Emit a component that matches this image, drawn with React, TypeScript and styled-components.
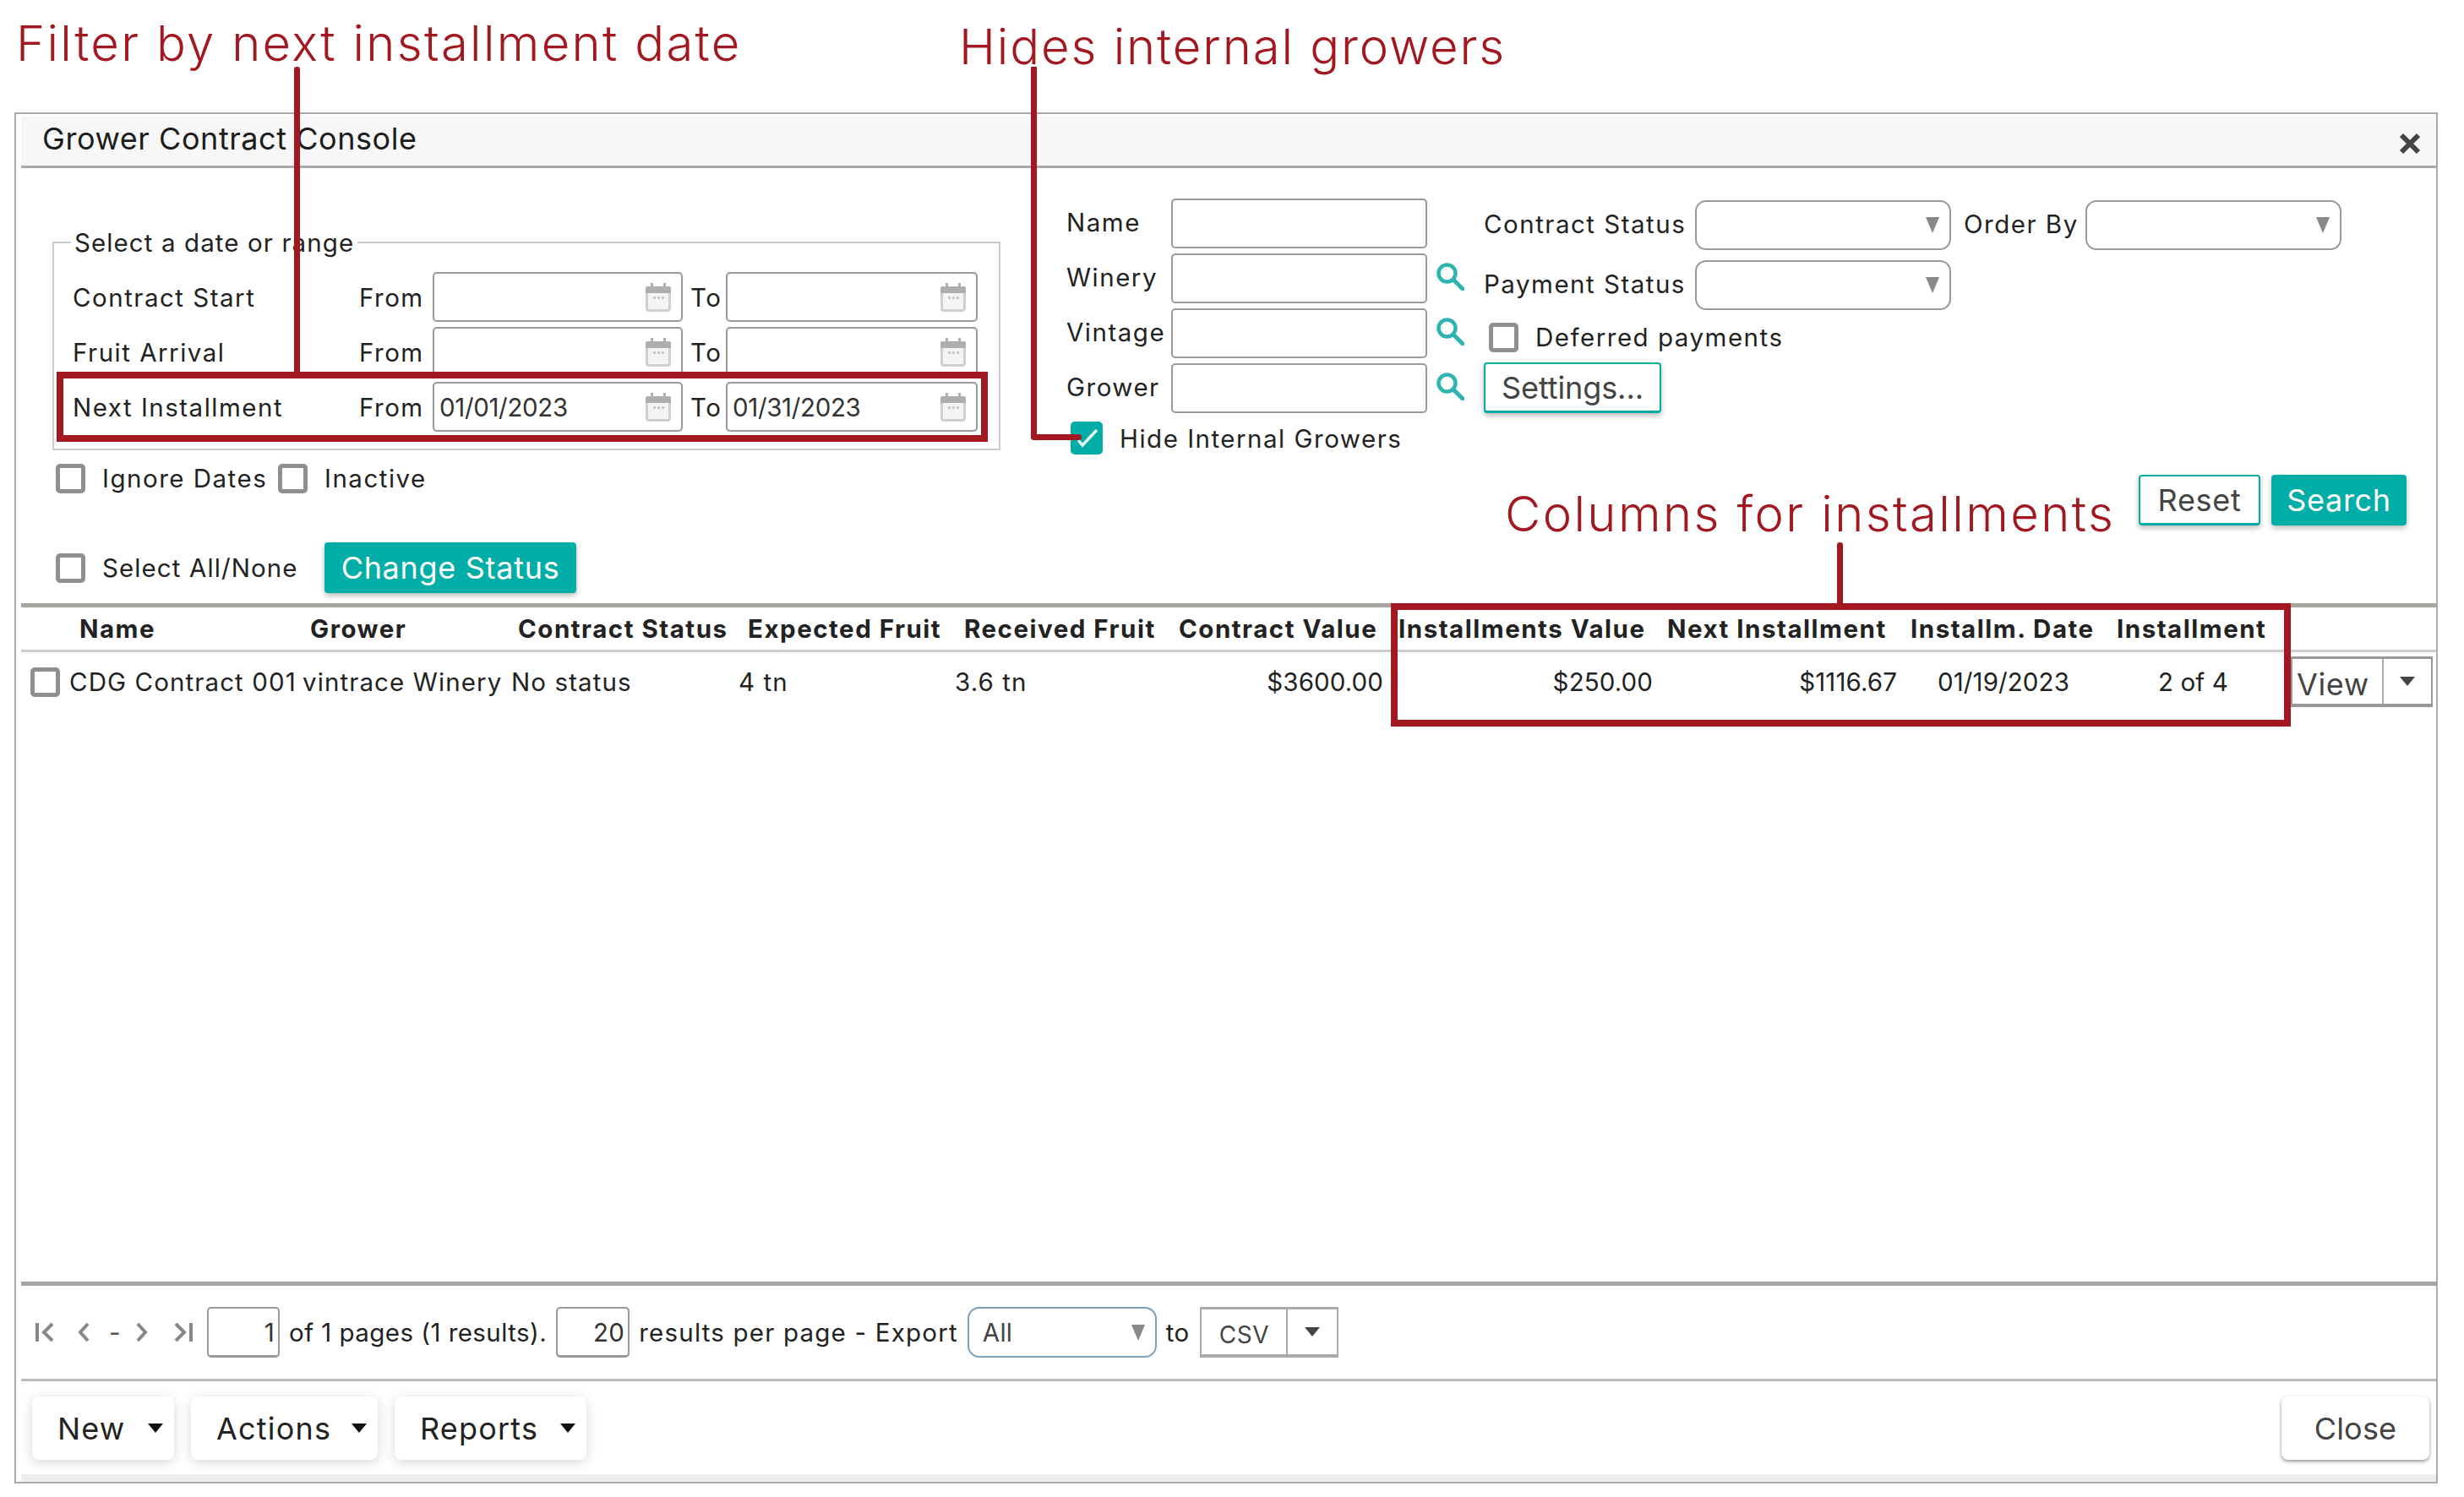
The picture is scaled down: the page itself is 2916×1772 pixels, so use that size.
import React from "react";
import styled, { createGlobalStyle } from "styled-components";

const GlobalStyle = createGlobalStyle`
  html, body {
    margin: 0;
    background: #fff;
  }
  body {
    font-family: Inter, "Liberation Sans", sans-serif;
    font-size: 29.5px;
    letter-spacing: 1.5px;
    color: #222;
  }
  * {
    box-sizing: border-box;
  }
`;

const RED = "#a31720";
const TEAL = "#00ada7";

const Page = styled.div`
  position: relative;
  width: 2916px;
  height: 1772px;
  padding: 133px 0 0 17px;
  overflow: hidden;
`;

const Note = styled.div<{ $x: number; $y: number; $spacing: number }>`
  position: absolute;
  left: ${(p) => p.$x}px;
  top: ${(p) => p.$y}px;
  font-size: 58px;
  line-height: 70px;
  font-weight: 300;
  letter-spacing: ${(p) => p.$spacing}px;
  color: ${RED};
  white-space: nowrap;
`;

const Highlight = styled.div<{ $x: number; $y: number; $w: number; $h: number }>`
  position: absolute;
  left: ${(p) => p.$x}px;
  top: ${(p) => p.$y}px;
  width: ${(p) => p.$w}px;
  height: ${(p) => p.$h}px;
  border: 8px solid ${RED};
  pointer-events: none;
`;

const Leader = styled.div<{ $x: number; $y: number; $h: number }>`
  position: absolute;
  left: ${(p) => p.$x}px;
  top: ${(p) => p.$y}px;
  width: 7px;
  height: ${(p) => p.$h}px;
  background: ${RED};
  border-radius: 3px 3px 0 0;
`;

const ElbowLeader = styled.div`
  position: absolute;
  left: 1220px;
  top: 79px;
  width: 57px;
  height: 442px;
  border-left: 7px solid ${RED};
  border-bottom: 7px solid ${RED};
  border-bottom-left-radius: 4px;
  &::after {
    content: "";
    position: absolute;
    right: -3px;
    bottom: -7px;
    width: 7px;
    height: 7px;
    border-radius: 50%;
    background: ${RED};
  }
`;

const Window = styled.div`
  width: 2868px;
  height: 1623px;
  border: 2px solid #aaa;
  padding-left: 6px;
  display: flex;
  flex-direction: column;
`;

const TitleBar = styled.div`
  margin-top: 2px;
  height: 62px;
  flex: none;
  padding: 0 18px 6px 25px;
  background: #f7f7f7;
  border-bottom: 3px solid #aaa;
  display: flex;
  align-items: center;
  justify-content: space-between;
  font-size: 36px;
  letter-spacing: 0.55px;
  color: #1c1c1c;
`;

const CloseX = styled.svg`
  width: 26px;
  height: 26px;
  margin-top: 12px;
`;

const Filters = styled.div`
  height: 515px;
  flex: none;
  padding-left: 37px;
  display: flex;
`;

const LeftColumn = styled.div`
  width: 1122px;
  flex: none;
`;

const DateSet = styled.fieldset`
  margin: 70px 0 0;
  min-width: 0;
  height: 264px;
  padding: 17px 0 0 22px;
  border: 2px solid #ccc;
  display: flex;
  flex-direction: column;
  gap: 6px;
`;

const Legend = styled.legend`
  margin-left: -2px;
  padding: 0 4px;
  height: 36px;
  line-height: 36px;
  letter-spacing: 1.1px;
`;

const DateRow = styled.div`
  display: grid;
  grid-template-columns: 339px 87px 296px 51px 298px;
  align-items: center;
`;

const ToLabel = styled.span`
  padding-left: 9px;
`;

const DateField = styled.div`
  height: 59px;
  padding: 0 12px 0 6px;
  border: 2px solid #999;
  border-radius: 5px;
  display: flex;
  align-items: center;
  justify-content: space-between;
  color: #333;
  letter-spacing: -0.35px;
`;

const CalendarSvg = styled.svg`
  width: 30px;
  height: 34px;
  margin-left: auto;
  flex: none;
`;

const CheckRow = styled.div<{ $top: number; $left: number; $height?: number }>`
  margin: ${(p) => p.$top}px 0 0 ${(p) => p.$left}px;
  height: ${(p) => p.$height ?? 34}px;
  display: flex;
  align-items: center;
`;

const Box = styled.span<{ $checked?: boolean }>`
  width: ${(p) => (p.$checked ? 38 : 35)}px;
  height: ${(p) => (p.$checked ? 39 : 35)}px;
  flex: none;
  margin-right: 20px;
  border: ${(p) => (p.$checked ? "none" : "5px solid #8f8f8f")};
  border-radius: 5px;
  background: ${(p) => (p.$checked ? TEAL : "#fff")};
  filter: blur(0.4px);
  display: flex;
  align-items: center;
  justify-content: center;
`;

const CheckText = styled.span<{ $w?: number; $spacing?: number }>`
  width: ${(p) => (p.$w ? `${p.$w}px` : "auto")};
  flex: none;
  white-space: nowrap;
  letter-spacing: ${(p) => p.$spacing ?? 1.5}px;
`;

const Button = styled.div<{ $solid?: boolean; $w: number; $spacing?: number }>`
  width: ${(p) => p.$w}px;
  height: 60px;
  flex: none;
  border-radius: 4px;
  border: 2px solid ${TEAL};
  border-bottom-width: 3px;
  background: ${(p) => (p.$solid ? TEAL : "#fff")};
  color: ${(p) => (p.$solid ? "#fff" : "#444")};
  box-shadow: 0 3px 6px rgba(0, 0, 0, 0.28);
  font-size: 36px;
  letter-spacing: ${(p) => p.$spacing ?? 0.7}px;
  display: flex;
  align-items: center;
  justify-content: center;
`;

const MiddleColumn = styled.div`
  width: 494px;
  margin-left: 78px;
  padding-top: 36px;
  flex: none;
`;

const SearchRow = styled.div`
  height: 59px;
  margin-bottom: 6px;
  display: grid;
  grid-template-columns: 124px 303px 43px;
  align-items: center;
`;

const FieldLabel = styled.span`
  padding-bottom: 3px;
  white-space: nowrap;
`;

const PlainField = styled.div`
  height: 59px;
  border: 2px solid #999;
  border-radius: 5px;
`;

const SearchSvg = styled.svg`
  width: 33px;
  height: 33px;
  margin-left: 11px;
  margin-top: -4px;
`;

const HideRow = styled.div`
  margin: 10px 0 0 5px;
  display: flex;
  align-items: center;
  white-space: nowrap;
`;

const RightColumn = styled.div`
  width: 1092px;
  padding-top: 38px;
  flex: none;
`;

const StatusGrid = styled.div`
  display: grid;
  grid-template-columns: 250px 303px 15px 144px 303px;
  row-gap: 12px;
  align-items: center;
`;

const StatusLabel = styled(FieldLabel)<{ $column?: number }>`
  grid-column: ${(p) => p.$column ?? 1};
`;

const SelectBox = styled.div<{ $column?: number }>`
  grid-column: ${(p) => p.$column ?? 2};
  height: 59px;
  padding-right: 12px;
  border: 2px solid #999;
  border-radius: 13px;
  display: flex;
  align-items: center;
  justify-content: flex-end;
`;

const GrayArrow = styled.span`
  width: 0;
  height: 0;
  border-left: 8px solid transparent;
  border-right: 8px solid transparent;
  border-top: 19px solid #888;
`;

const ResetRow = styled.div`
  margin-top: 73px;
  display: flex;
  justify-content: flex-end;
  gap: 13px;
`;

const Table = styled.div`
  flex: 1;
  border-top: 5px solid #a8a5a1;
  border-bottom: 5px solid #a8a5a1;
`;

const COLUMNS = "57px 276px 247px 269px 256px 255px 261px 319px 289px 241px 205px 184px";

const HeaderRow = styled.div`
  height: 53px;
  border-bottom: 3px solid #ccc;
  display: grid;
  grid-template-columns: ${COLUMNS};
  align-items: center;
  font-weight: 700;
  letter-spacing: 1.5px;
  white-space: nowrap;
  color: #222;
`;

const HeaderCell = styled.div<{ $pad: number }>`
  padding-left: ${(p) => p.$pad}px;
`;

const DataRow = styled.div`
  height: 65px;
  padding-top: 5px;
  display: grid;
  grid-template-columns: ${COLUMNS};
  align-items: center;
  white-space: nowrap;
`;

const DataCell = styled.div<{ $pad?: number; $end?: number; $num?: boolean }>`
  padding-left: ${(p) => p.$pad ?? 0}px;
  padding-right: ${(p) => p.$end ?? 0}px;
  text-align: ${(p) => (p.$end ? "right" : "left")};
  letter-spacing: ${(p) => (p.$num ? 0.1 : 1.1)}px;
`;

const RowBox = styled.div`
  padding-left: 11px;
`;

const SplitButton = styled.div<{ $w: number; $split: number; $strong?: boolean }>`
  width: ${(p) => p.$w}px;
  height: 60px;
  border: 2px solid ${(p) => (p.$strong ? "#999" : "#aaa")};
  border-top-width: 3px;
  border-bottom-width: 4px;
  display: grid;
  grid-template-columns: ${(p) => p.$split}px 1fr;
  align-items: stretch;
`;

const SplitLabel = styled.div<{ $size: number; $end?: number }>`
  border-right: 2px solid #aaa;
  padding: 6px ${(p) => p.$end ?? 0}px 0 0;
  display: flex;
  align-items: center;
  justify-content: center;
  font-size: ${(p) => p.$size}px;
  color: #444;
  letter-spacing: 0.6px;
`;

const SplitCaret = styled.div`
  display: flex;
  align-items: center;
  justify-content: center;
`;

const Caret = styled.span<{ $dark?: boolean }>`
  width: 0;
  height: 0;
  flex: none;
  border-left: 9px solid transparent;
  border-right: 9px solid transparent;
  border-top: 11px solid ${(p) => (p.$dark ? "#111" : "#444")};
`;

const ViewHolder = styled.div`
  margin-left: 11px;
`;

const Pager = styled.div`
  height: 110px;
  flex: none;
  padding-left: 16px;
  display: flex;
  align-items: center;
  gap: 11px;
  white-space: nowrap;
`;

const PagerNav = styled.div`
  width: 193px;
  flex: none;
  display: flex;
  align-items: center;
  color: #888;
`;

const NavSvg = styled.svg<{ $w: number; $left?: number }>`
  width: ${(p) => p.$w}px;
  height: 28px;
  margin-left: ${(p) => p.$left ?? 0}px;
  flex: none;
`;

const NavDash = styled.span`
  width: 9px;
  margin-left: 23px;
  color: #555;
  letter-spacing: 0;
`;

const PagerText = styled.span<{ $spacing: number }>`
  letter-spacing: ${(p) => p.$spacing}px;
`;

const NumberField = styled.div<{ $w: number }>`
  width: ${(p) => p.$w}px;
  height: 60px;
  padding-right: 4px;
  border: 2px solid #999;
  border-bottom-width: 3px;
  border-radius: 5px;
  display: flex;
  align-items: center;
  justify-content: flex-end;
  color: #333;
  letter-spacing: 0.3px;
`;

const ExportSelect = styled.div`
  width: 224px;
  height: 60px;
  padding: 0 12px 0 16px;
  border: 2px solid #7a9fc0;
  border-radius: 14px;
  display: flex;
  align-items: center;
  justify-content: space-between;
  color: #444;
  letter-spacing: 0.3px;
`;

const ToText = styled.span`
  margin-right: 2px;
  letter-spacing: 0.3px;
`;

const ActionBar = styled.div`
  height: 122px;
  flex: none;
  padding: 18px 8px 0 13px;
  border-top: 3px solid #bbb;
  border-bottom: 9px solid #eee;
  display: flex;
  gap: 20px;
`;

const ActionButton = styled.div<{ $w: number }>`
  width: ${(p) => p.$w}px;
  height: 75px;
  padding: 0 13px 0 30px;
  border-radius: 8px;
  background: #fff;
  box-shadow: 0 3px 14px rgba(0, 0, 0, 0.16);
  display: flex;
  align-items: center;
  justify-content: space-between;
  font-size: 36px;
  letter-spacing: 1.2px;
  color: #222;
`;

const CloseButton = styled.div`
  width: 175px;
  height: 75px;
  margin-left: auto;
  border-radius: 8px;
  background: #fff;
  box-shadow: 0 2px 4px rgba(0, 0, 0, 0.42);
  display: flex;
  align-items: center;
  justify-content: center;
  font-size: 36px;
  letter-spacing: 0.2px;
  color: #444;
`;

const Calendar = () => (
  <CalendarSvg viewBox="0 0 30 34">
    <rect x="6" y="0" width="3" height="6" fill="#b0b0b0" />
    <rect x="21" y="0" width="3" height="6" fill="#b0b0b0" />
    <path d="M2 4h26a2 2 0 0 1 2 2v6H0V6a2 2 0 0 1 2-2z" fill="#aeaeae" />
    <path d="M1.5 12v18a2.5 2.5 0 0 0 2.5 2.5h22a2.5 2.5 0 0 0 2.5-2.5V12" fill="#f4f4f4" stroke="#cfcfcf" strokeWidth="3" />
    <rect x="9" y="16" width="3" height="3" fill="#c8c8c8" />
    <rect x="14" y="16" width="3" height="3" fill="#c8c8c8" />
    <rect x="19" y="16" width="3" height="3" fill="#c8c8c8" />
  </CalendarSvg>
);

const SearchIcon = () => (
  <SearchSvg viewBox="0 0 33 33" fill="none" stroke="#2fb5b0">
    <circle cx="12.5" cy="12.5" r="10" strokeWidth="4.5" />
    <path d="M20 20l11 11" strokeWidth="5" strokeLinecap="round" />
  </SearchSvg>
);

const dateRows = [
  { label: "Contract Start", from: "", to: "" },
  { label: "Fruit Arrival", from: "", to: "" },
  { label: "Next Installment", from: "01/01/2023", to: "01/31/2023" },
];

const headers = [
  { title: "", pad: 0 },
  { title: "Name", pad: 12 },
  { title: "Grower", pad: 9 },
  { title: "Contract Status", pad: 8 },
  { title: "Expected Fruit", pad: 11 },
  { title: "Received Fruit", pad: 11 },
  { title: "Contract Value", pad: 10 },
  { title: "Installments Value", pad: 9 },
  { title: "Next Installment", pad: 8 },
  { title: "Installm. Date", pad: 7 },
  { title: "Installment", pad: 10 },
];

export default function App() {
  return (
    <Page>
      <GlobalStyle />
      <Window>
        <TitleBar>
          Grower Contract Console
          <CloseX viewBox="0 0 26 26">
            <path d="M3 3l20 20M23 3L3 23" stroke="#444" strokeWidth="6" />
          </CloseX>
        </TitleBar>
        <Filters>
          <LeftColumn>
            <DateSet>
              <Legend>Select a date or range</Legend>
              {dateRows.map((row) => (
                <DateRow key={row.label}>
                  <span>{row.label}</span>
                  <span>From</span>
                  <DateField>
                    {row.from}
                    <Calendar />
                  </DateField>
                  <ToLabel>To</ToLabel>
                  <DateField>
                    {row.to}
                    <Calendar />
                  </DateField>
                </DateRow>
              ))}
            </DateSet>
            <CheckRow $top={16} $left={4}>
              <Box />
              <CheckText $w={208}>Ignore Dates</CheckText>
              <Box />
              <CheckText>Inactive</CheckText>
            </CheckRow>
            <CheckRow $top={59} $left={4} $height={60}>
              <Box />
              <CheckText $w={263} $spacing={1.1}>
                Select All/None
              </CheckText>
              <Button $solid $w={298}>
                Change Status
              </Button>
            </CheckRow>
          </LeftColumn>
          <MiddleColumn>
            <SearchRow>
              <FieldLabel>Name</FieldLabel>
              <PlainField />
            </SearchRow>
            <SearchRow>
              <FieldLabel>Winery</FieldLabel>
              <PlainField />
              <SearchIcon />
            </SearchRow>
            <SearchRow>
              <FieldLabel>Vintage</FieldLabel>
              <PlainField />
              <SearchIcon />
            </SearchRow>
            <SearchRow>
              <FieldLabel>Grower</FieldLabel>
              <PlainField />
              <SearchIcon />
            </SearchRow>
            <HideRow>
              <Box $checked>
                <svg width="30" height="30" viewBox="0 0 30 30" fill="none">
                  <path d="M5 17l5 6L27 5" stroke="#e6f7f6" strokeWidth="3.5" />
                </svg>
              </Box>
              Hide Internal Growers
            </HideRow>
          </MiddleColumn>
          <RightColumn>
            <StatusGrid>
              <StatusLabel>Contract Status</StatusLabel>
              <SelectBox>
                <GrayArrow />
              </SelectBox>
              <StatusLabel $column={4}>Order By</StatusLabel>
              <SelectBox $column={5}>
                <GrayArrow />
              </SelectBox>
              <StatusLabel>Payment Status</StatusLabel>
              <SelectBox>
                <GrayArrow />
              </SelectBox>
            </StatusGrid>
            <CheckRow $top={15} $left={6}>
              <Box />
              <CheckText>Deferred payments</CheckText>
            </CheckRow>
            <CheckRow $top={13} $left={0} $height={60}>
              <Button $w={210} $spacing={-0.1}>
                Settings...
              </Button>
            </CheckRow>
            <ResetRow>
              <Button $w={144}>Reset</Button>
              <Button $solid $w={160}>
                Search
              </Button>
            </ResetRow>
          </RightColumn>
        </Filters>
        <Table>
          <HeaderRow>
            {headers.map((h) => (
              <HeaderCell key={h.title} $pad={h.pad}>
                {h.title}
              </HeaderCell>
            ))}
          </HeaderRow>
          <DataRow>
            <RowBox>
              <Box />
            </RowBox>
            <DataCell>CDG Contract 001</DataCell>
            <DataCell>vintrace Winery</DataCell>
            <DataCell>No status</DataCell>
            <DataCell>4 tn</DataCell>
            <DataCell>3.6 tn</DataCell>
            <DataCell $end={9} $num>
              $3600.00
            </DataCell>
            <DataCell $end={9} $num>
              $250.00
            </DataCell>
            <DataCell $end={9} $num>
              $1116.67
            </DataCell>
            <DataCell $pad={39} $num>
              01/19/2023
            </DataCell>
            <DataCell $pad={59} $num>
              2 of 4
            </DataCell>
            <ViewHolder>
              <SplitButton $w={168} $split={108} $strong>
                <SplitLabel $size={36} $end={10}>
                  View
                </SplitLabel>
                <SplitCaret>
                  <Caret />
                </SplitCaret>
              </SplitButton>
            </ViewHolder>
          </DataRow>
        </Table>
        <Pager>
          <PagerNav>
            <NavSvg $w={24} viewBox="0 0 24 28" fill="none" stroke="currentColor" strokeWidth="4">
              <path d="M3 3v22M21 4L11 14l10 10" />
            </NavSvg>
            <NavSvg $w={14} $left={27} viewBox="0 0 14 28" fill="none" stroke="currentColor" strokeWidth="4">
              <path d="M12 4L3 14l9 10" />
            </NavSvg>
            <NavDash>-</NavDash>
            <NavSvg $w={14} $left={23} viewBox="0 0 14 28" fill="none" stroke="currentColor" strokeWidth="4">
              <path d="M2 4l9 10-9 10" />
            </NavSvg>
            <NavSvg $w={24} $left={30} viewBox="0 0 24 28" fill="none" stroke="currentColor" strokeWidth="4">
              <path d="M3 4l10 10L3 24M21 3v22" />
            </NavSvg>
          </PagerNav>
          <NumberField $w={86}>1</NumberField>
          <PagerText $spacing={0.45}>of 1 pages (1 results).</PagerText>
          <NumberField $w={87}>20</NumberField>
          <PagerText $spacing={1.2}>results per page - Export</PagerText>
          <ExportSelect>
            All
            <GrayArrow />
          </ExportSelect>
          <ToText>to</ToText>
          <SplitButton $w={164} $split={102}>
            <SplitLabel $size={28}>CSV</SplitLabel>
            <SplitCaret>
              <Caret />
            </SplitCaret>
          </SplitButton>
        </Pager>
        <ActionBar>
          <ActionButton $w={168}>
            New
            <Caret $dark />
          </ActionButton>
          <ActionButton $w={221}>
            Actions
            <Caret $dark />
          </ActionButton>
          <ActionButton $w={227}>
            Reports
            <Caret $dark />
          </ActionButton>
          <CloseButton>Close</CloseButton>
        </ActionBar>
      </Window>
      <Note $x={19} $y={16} $spacing={2.3}>
        Filter by next installment date
      </Note>
      <Note $x={1135} $y={20} $spacing={1.9}>
        Hides internal growers
      </Note>
      <Note $x={1781} $y={573} $spacing={2.4}>
        Columns for installments
      </Note>
      <Leader $x={348} $y={79} $h={361} />
      <ElbowLeader />
      <Leader $x={2174} $y={642} $h={72} />
      <Highlight $x={67} $y={440} $w={1102} $h={83} />
      <Highlight $x={1646} $y={714} $w={1065} $h={146} />
    </Page>
  );
}
